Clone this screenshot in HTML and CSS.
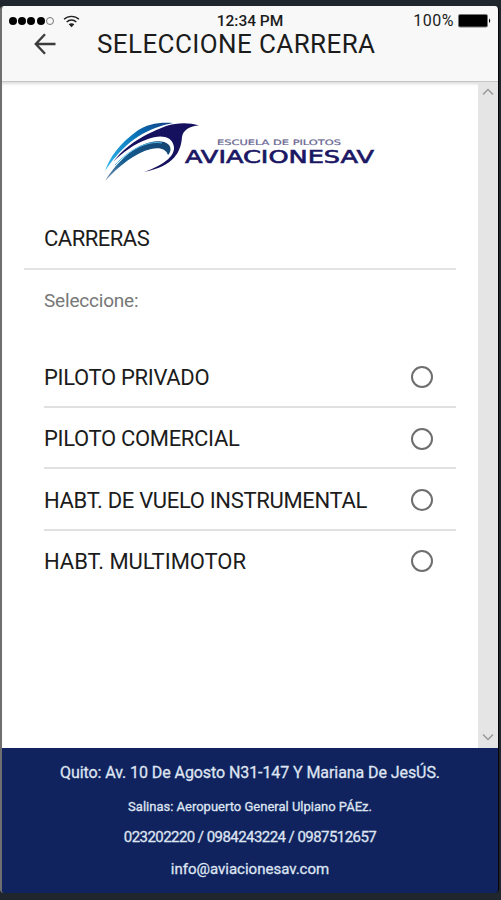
FILE: index.html
```
<!DOCTYPE html>
<html lang="es">
<head>
    <meta charset="UTF-8">
    <meta name="viewport" content="width=device-width, initial-scale=1.0">
    <title>Seleccione Carrera</title>
    <link rel="stylesheet" href="styles.css">
</head>
<body>
    <div class="phone">
        <header class="header">
            <div class="status-bar">
                <div class="signal">
                    <span class="dot"></span>
                    <span class="dot"></span>
                    <span class="dot"></span>
                    <span class="dot"></span>
                    <span class="dot empty"></span>
                    <svg class="wifi" width="17" height="13" viewBox="0 0 17 13" fill="none" stroke="#222">
                        <path d="M1 4.3C5.2 0.3 11.8 0.3 16 4.3" stroke-width="1.3" />
                        <path d="M3.7 7C6.4 4.4 10.6 4.4 13.3 7" stroke-width="1.5" />
                        <path d="M8.5 12.2L5.7 9.2C7.3 7.8 9.7 7.8 11.3 9.2Z" fill="#222" stroke="none" />
                    </svg>
                </div>
                <span class="time">12:34 PM</span>
                <div class="battery">
                    <span>100%</span>
                    <svg width="33" height="14" viewBox="0 0 33 14">
                        <rect x="0.5" y="0.5" width="29" height="12.5" rx="1.5" fill="#000" stroke="#777" />
                        <path d="M31 4.5C32.7 5.5 32.7 8 31 9Z" fill="#000" />
                    </svg>
                </div>
            </div>
            <div class="toolbar">
                <svg class="back" width="22" height="22" viewBox="0 0 22 22" fill="none" stroke="#3c3c3c" stroke-width="2.4">
                    <path d="M21.5 11H2M11 1.2L1.8 11L11 20.8" />
                </svg>
                <h1 class="title">SELECCIONE CARRERA</h1>
            </div>
        </header>
        <div class="content">
            <main class="page">
                <svg class="logo" width="290" height="75" viewBox="0 0 290 75">
                    <defs>
                        <linearGradient id="wing" x1="0" y1="1" x2="1" y2="0">
                            <stop offset="0" stop-color="#35bdf0" />
                            <stop offset="0.6" stop-color="#0873b8" />
                            <stop offset="1" stop-color="#123d83" />
                        </linearGradient>
                        <linearGradient id="tail" x1="0" y1="1" x2="1" y2="0">
                            <stop offset="0" stop-color="#7891b0" />
                            <stop offset="0.4" stop-color="#135d91" />
                            <stop offset="1" stop-color="#16436f" />
                        </linearGradient>
                    </defs>
                    <path d="M10 56C15 42 24 29 42 16C52 9 64 7 78 8C66 10 54 15 44 21C31 29 20 41 10 56Z" fill="url(#wing)" />
                    <path d="M18 47C26 36 40 25 55 18C64 14 71 10 80 9C88 7.5 96 8 104 10.5C95 11 88 15 87 22C86 36 80 51 49 57C61 53 80 44 79 32C77 20 64 20 53 24C39 29 28 37 18 47Z" fill="#15115f" />
                    <path d="M10 66C18 53 30 39 45 31C56 26 68 24 74 30C77 34 75 38 73 40C71 34 65 32 56 34C40 38 25 50 10 66Z" fill="url(#tail)" />
                    <path d="M20 50C33 36 52 25 67 28" fill="none" stroke="#54b9e2" stroke-width="1" />
                    <text class="logo-small" x="122" y="29.5" textLength="124" lengthAdjust="spacingAndGlyphs">ESCUELA DE PILOTOS</text>
                    <text class="logo-name" x="90" y="47.5" textLength="189" lengthAdjust="spacingAndGlyphs">AVIACIONESAV</text>
                </svg>
                <h2 class="list-header">CARRERAS</h2>
                <p class="hint">Seleccione:</p>
                <div class="options">
                    <label class="option"><span>PILOTO PRIVADO</span><input type="radio" name="carrera"></label>
                    <label class="option"><span>PILOTO COMERCIAL</span><input type="radio" name="carrera"></label>
                    <label class="option"><span>HABT. DE VUELO INSTRUMENTAL</span><input type="radio" name="carrera"></label>
                    <label class="option"><span>HABT. MULTIMOTOR</span><input type="radio" name="carrera"></label>
                </div>
            </main>
            <div class="scrollbar">
                <svg width="12" height="8" viewBox="0 0 12 8"><path d="M1 6.5L6 1.5L11 6.5" /></svg>
                <svg width="12" height="8" viewBox="0 0 12 8"><path d="M1 1.5L6 6.5L11 1.5" /></svg>
            </div>
        </div>
        <footer class="footer">
            <p class="quito">Quito: Av. 10 De Agosto N31-147 Y Mariana De JesÚS.</p>
            <p class="salinas">Salinas: Aeropuerto General Ulpiano PÁEz.</p>
            <p class="phones">023202220 / 0984243224 / 0987512657</p>
            <p class="mail">info@aviacionesav.com</p>
        </footer>
    </div>
</body>
</html>
```
FILE: styles.css
```
* {
    box-sizing: border-box;
}
body {
    margin: 0;
    background-color: #20262e;
    font-family: Roboto, "Liberation Sans", sans-serif;
    color: #1c1c1c;
}
h1, h2, p {
    margin: 0;
    font-weight: 400;
    white-space: nowrap;
}
.phone {
    display: flex;
    flex-direction: column;
    height: 887px;
    margin: 6px 2px 0 0;
    border-left: 2px solid #6f6f71;
    border-right: 1px solid #050505;
    border-radius: 4px;
    overflow: hidden;
}
.header {
    height: 76px;
    background-color: #f8f8f8;
    border-bottom: 1px solid #c6c6c6;
    flex-shrink: 0;
}
.status-bar {
    display: grid;
    grid-template-columns: 1fr auto 1fr;
    align-items: center;
    height: 22px;
    padding: 7px 7px 0 7px;
    line-height: 16px;
    font-size: 16px;
}
.signal {
    display: flex;
    align-items: center;
    gap: 1.2px;
}
.dot {
    width: 8px;
    height: 8px;
    border-radius: 50%;
    background-color: #000;
}
.empty {
    background-color: transparent;
    border: 1px solid #777;
}
.wifi {
    margin-left: 8px;
}
.time {
    font-size: 15.5px;
    font-weight: 500;
}
.battery {
    display: flex;
    justify-content: flex-end;
    align-items: center;
    gap: 4px;
    letter-spacing: 0.5px;
}
.toolbar {
    display: flex;
    align-items: center;
    height: 32px;
    padding-left: 32px;
}
.title {
    margin-left: 41px;
    font-size: 26px;
    line-height: 34px;
    letter-spacing: 0.4px;
}
.content {
    display: flex;
    height: 666px;
    background-color: #fff;
    box-shadow: inset 0 3px 3px -1px #ddd;
    flex-shrink: 0;
}
.page {
    flex: 1;
    padding: 33px 22px 0 22px;
}
.logo {
    display: block;
    margin-left: 71px;
}
.logo-small {
    font-family: "DejaVu Sans", sans-serif;
    font-size: 7.5px;
    fill: #66648f;
    stroke: #66648f;
    stroke-width: 0.2;
}
.logo-name {
    font-family: "DejaVu Sans", sans-serif;
    font-size: 17px;
    fill: #1b1764;
    stroke: #1b1764;
    stroke-width: 0.6;
}
.list-header {
    height: 80px;
    padding: 37px 0 0 20px;
    border-bottom: 2px solid #e3e3e3;
    font-size: 22px;
    line-height: 24px;
    letter-spacing: -0.5px;
}
.hint {
    height: 76px;
    padding: 19px 0 0 20px;
    font-size: 19px;
    line-height: 24px;
    letter-spacing: -0.2px;
    color: #777;
}
.options {
    margin-left: 20px;
}
.option {
    display: flex;
    align-items: center;
    justify-content: space-between;
    height: 61.5px;
    padding: 3px 23px 0 0;
    border-bottom: 2px solid #e0e0e0;
    font-size: 22px;
    letter-spacing: -0.33px;
    white-space: nowrap;
}
.option:last-child {
    padding-top: 0;
    border-bottom: none;
    letter-spacing: -0.05px;
}
.option input {
    appearance: none;
    width: 22px;
    height: 22px;
    margin: 0;
    border: 2.5px solid #6e6e6e;
    border-radius: 50%;
}
.scrollbar {
    display: flex;
    flex-direction: column;
    justify-content: space-between;
    align-items: center;
    width: 20px;
    padding: 6px 0 7px;
    background-color: #e5e5e5;
}
.scrollbar path {
    fill: none;
    stroke: #999;
    stroke-width: 1.5;
}
.footer {
    flex: 1;
    padding-top: 13px;
    background-color: #10235f;
    color: #dfe4f1;
    text-align: center;
}
.footer p {
    -webkit-text-stroke: 0.3px #dfe4f1;
}
.quito {
    font-size: 16px;
    line-height: 24px;
    letter-spacing: -0.08px;
}
.salinas {
    margin-top: 12px;
    font-size: 13px;
    line-height: 20px;
}
.phones {
    margin-top: 9px;
    font-size: 15px;
    line-height: 22px;
    letter-spacing: -0.55px;
}
.mail {
    margin-top: 10px;
    font-size: 15px;
    line-height: 22px;
}
```
